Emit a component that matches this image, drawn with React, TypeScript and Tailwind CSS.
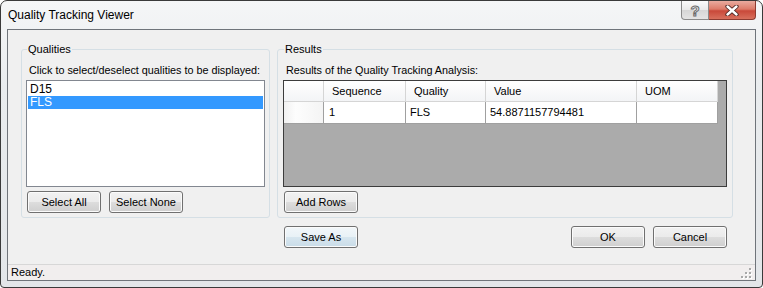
import React from 'react'

const FONT = "font-['Liberation_Sans',Arial,sans-serif]"

const BTN =
  'flex h-[22px] w-[74px] shrink-0 items-center justify-center rounded-[3px] border border-[#707070] bg-[linear-gradient(#f2f2f2,#ebebeb_50%,#dddddd_50%,#cfcfcf)] text-[11px] leading-none text-black shadow-[inset_0_0_0_1px_#fbfbfb]'

const COLS = [
  { label: 'Sequence', w: 'w-[82px]', value: '1' },
  { label: 'Quality', w: 'w-[80px]', value: 'FLS' },
  { label: 'Value', w: 'w-[151px]', value: '54.8871157794481' },
  { label: 'UOM', w: 'w-[81px]', value: '' },
]

function CaptionButtons() {
  return (
    <div className="flex h-[19px] shrink-0">
      <div className="flex h-[19px] w-[28px] items-center justify-center rounded-bl-[4px] border border-t-0 border-[#8a8a8a] bg-[linear-gradient(#fbfbfb,#e9e9e9_50%,#d6d6d6_50%,#e4e4e4)]">
        <span className="text-[15px] font-bold leading-none text-white [-webkit-text-stroke:1px_#6a6a6a]">?</span>
      </div>
      <div className="flex h-[19px] w-[47px] items-center justify-center rounded-br-[4px] border border-l-0 border-t-0 border-[#8d3b31] bg-[linear-gradient(#e9ab9f,#dc7b69_45%,#c9493a_55%,#d8705d)]">
        <svg width="14" height="11" viewBox="0 0 14 11">
          <path d="M2.5 1.5 L11.5 9.5 M11.5 1.5 L2.5 9.5" stroke="#4a2420" strokeWidth="4.2" strokeLinecap="round" />
          <path d="M2.5 1.5 L11.5 9.5 M11.5 1.5 L2.5 9.5" stroke="#ffffff" strokeWidth="2.4" strokeLinecap="round" />
        </svg>
      </div>
    </div>
  )
}

function ResizeGrip() {
  const dots = [
    [8, 0],
    [8, 4],
    [4, 4],
    [8, 8],
    [4, 8],
    [0, 8],
  ]
  return (
    <svg width="12" height="12" viewBox="0 0 12 12" className="mr-[2px] self-end">
      {dots.map(([x, y], i) => (
        <g key={i}>
          <rect x={x + 1} y={y + 1} width="2" height="2" fill="#ffffff" />
          <rect x={x} y={y} width="2" height="2" fill="#a8a8a8" />
        </g>
      ))}
    </svg>
  )
}

export default function App() {
  return (
    <div
      className={`flex h-[288px] w-[763px] flex-col rounded-t-[7px] rounded-b-[4px] border border-[#3a3a3a] bg-[linear-gradient(#f5f6f7,#e9ecee_30%,#e3e6e9)] px-[6px] pb-[6px] text-black ${FONT}`}
    >
      {/* Title bar */}
      <div className="flex h-[28px] shrink-0 items-start">
        <div className="flex h-full flex-1 items-center pl-[1px] text-[12px]">Quality Tracking Viewer</div>
        <CaptionButtons />
      </div>

      {/* Client area */}
      <div className="flex flex-1 flex-col border border-[#6f747a] bg-[#f0f0f0]">
        <div className="flex-1 pl-[13px] pt-[13px]">
          <div className="flex gap-[7px]">
            {/* Qualities */}
            <fieldset className="w-[249px] rounded-[3px] border border-[#d5dfe5] p-0">
              <legend className="ml-[5px] px-[1px] text-[11px] leading-[13px]">Qualities</legend>
              <div className="px-[4px] pb-[4px]">
                <div className="mt-[8px] h-[13px] pl-[3px] text-[10.8px] leading-[13px]">
                  Click to select/deselect qualities to be displayed:
                </div>
                <div className="mt-[3px] h-[107px] border border-[#828790] bg-white px-[1px] pt-[2px] text-[12px] leading-[13px]">
                  <div className="h-[13px] pl-[2px]">D15</div>
                  <div className="h-[13px] bg-[#3399ff] pl-[2px] text-white">FLS</div>
                </div>
                <div className="mt-[4px] flex gap-[8px] pl-[1px]">
                  <button className={BTN}>Select All</button>
                  <button className={BTN}>Select None</button>
                </div>
              </div>
            </fieldset>

            {/* Results */}
            <fieldset className="w-[456px] rounded-[3px] border border-[#d5dfe5] p-0">
              <legend className="ml-[6px] px-[1px] text-[11px] leading-[13px]">Results</legend>
              <div className="pb-[4px]">
                <div className="mt-[8px] h-[13px] pl-[8px] text-[10.8px] leading-[13px]">
                  Results of the Quality Tracking Analysis:
                </div>
                <div className="mx-[5px] mt-[3px] h-[107px] border border-[#3c3c3c] bg-[#ababab] text-[11px]">
                  <div className="flex h-[21px]">
                    <div className="w-[40px] border-b border-r border-[#d5d5d5] bg-[linear-gradient(#ffffff,#f3f4f6)]" />
                    {COLS.map((c) => (
                      <div
                        key={c.label}
                        className={`${c.w} flex items-center border-b border-r border-[#d5d5d5] bg-[linear-gradient(#ffffff,#f3f4f6)] pl-[8px]`}
                      >
                        {c.label}
                      </div>
                    ))}
                  </div>
                  <div className="flex h-[22px]">
                    <div className="w-[40px] border-b border-r border-[#a0a0a0] bg-[linear-gradient(90deg,#f1f1f1,#fdfdfd_30%,#f4f4f4)]" />
                    {COLS.map((c, i) => (
                      <div
                        key={c.label}
                        className={`${c.w} flex items-center border-b border-r border-[#a0a0a0] bg-white ${i === 0 ? 'pl-[5px]' : 'pl-[4px]'}`}
                      >
                        {c.value}
                      </div>
                    ))}
                  </div>
                </div>
                <div className="ml-[6px] mt-[4px] flex">
                  <button className={BTN}>Add Rows</button>
                </div>
              </div>
            </fieldset>
          </div>

          {/* Dialog buttons */}
          <div className="mt-[8px] flex gap-[7px]">
            <div className="w-[249px]" />
            <div className="flex w-[456px]">
              <button
                className={`${BTN} ml-[7px] border-[#3c7fb1] bg-[linear-gradient(#f2f7fa,#e8f1f6_50%,#d7e6ef_50%,#c9dce8)] shadow-[inset_0_0_0_1px_#bfe3f7]`}
              >
                Save As
              </button>
              <div className="flex-1" />
              <div className="mr-[6px] flex gap-[8px]">
                <button className={BTN}>OK</button>
                <button className={BTN}>Cancel</button>
              </div>
            </div>
          </div>
        </div>

        {/* Status bar */}
        <div className="flex h-[16px] shrink-0 items-center justify-between border-t border-[#d7d7d7] bg-[#f1eeee] pl-[3px] text-[11px]">
          <span>Ready.</span>
          <ResizeGrip />
        </div>
      </div>
    </div>
  )
}
